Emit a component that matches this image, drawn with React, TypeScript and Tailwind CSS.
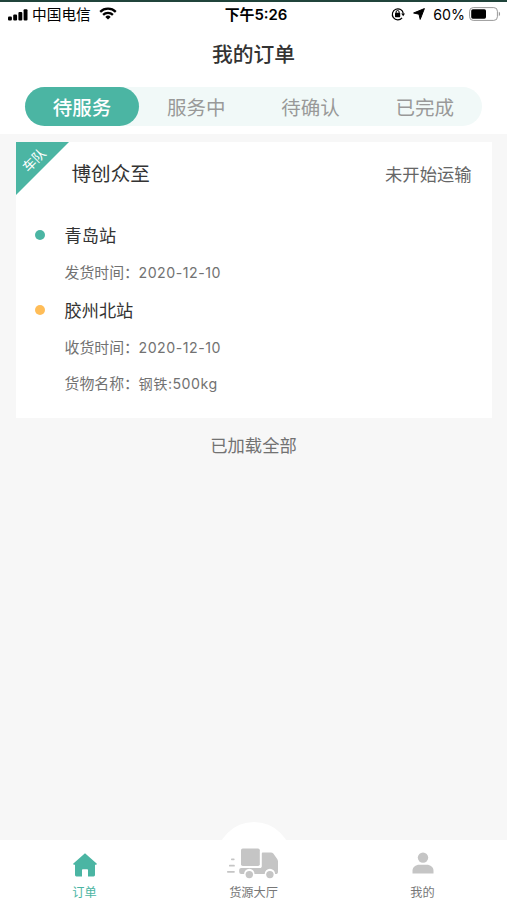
import * as React from 'react';

const tabs = ['待服务', '服务中', '待确认', '已完成'];

const orders = [
  {
    id: 1,
    tag: '车队',
    company: '博创众至',
    status: '未开始运输',
    from: '青岛站',
    sendDate: '2020-12-10',
    to: '胶州北站',
    receiveDate: '2020-12-10',
    goods: '钢铁:500kg',
  },
];

function StatusBar() {
  return (
    <div className="grid h-[26px] grid-cols-3 items-center text-[14.7px] leading-none text-black">
      <div className="flex items-center pl-2">
        <svg width="20" height="12" viewBox="0 0 20 12" fill="currentColor">
          <rect x="0" y="7.6" width="3.9" height="4" rx="1.1" />
          <rect x="5.2" y="5.6" width="3.9" height="6" rx="1.1" />
          <rect x="10.4" y="3" width="3.9" height="8.6" rx="1.1" />
          <rect x="15.6" y="0.2" width="3.9" height="11.4" rx="1.1" />
        </svg>
        <span className="mt-px ml-1 whitespace-nowrap">中国电信</span>
        <svg
          className="-mt-0.5 ml-2"
          width="18"
          height="13"
          viewBox="0 0 18 13"
          fill="none"
          stroke="currentColor"
          strokeWidth="2.3"
        >
          <path d="M1.2 4.8a11.2 11.2 0 0 1 15.6 0" />
          <path d="M4.1 7.9a7 7 0 0 1 9.8 0" />
          <path
            d="M9 12.6 6.3 9.9a3.9 3.9 0 0 1 5.4 0z"
            fill="currentColor"
            stroke="none"
          />
        </svg>
      </div>
      <div className="mt-px pl-[5px] text-center text-[14.9px] font-semibold">
        下午5:26
      </div>
      <div className="-mt-0.5 flex items-center justify-end pr-[6px]">
        <svg width="14" height="14" viewBox="0 0 14 14" fill="none">
          <path
            d="M11.1 10.8A5.5 5.5 0 1 1 12.3 6.6"
            stroke="currentColor"
            strokeWidth="1.2"
          />
          <path d="M10.2 6.5h3.8l-1.8 2.8z" fill="currentColor" />
          <rect x="4" y="5.8" width="5.2" height="4.4" rx="0.6" fill="currentColor" />
          <path d="M5.1 6.4V5a1.5 1.5 0 0 1 3 0v1.4" stroke="currentColor" />
        </svg>
        <svg
          className="ml-2"
          width="12"
          height="12"
          viewBox="0 0 12 12"
          fill="currentColor"
          stroke="currentColor"
          strokeLinejoin="round"
        >
          <path d="M11.4 0.6 7.2 11.4 6 6.2 0.6 5z" />
        </svg>
        <span className="mt-0.5 ml-2 text-[14.2px]">60%</span>
        <svg className="ml-1" width="32" height="14" viewBox="0 0 32 14">
          <rect
            x="0.6"
            y="0.6"
            width="27.8"
            height="12.8"
            rx="3.6"
            fill="none"
            stroke="#999"
          />
          <rect x="2.2" y="2.3" width="14.8" height="9.4" rx="1.6" fill="#000" />
          <path d="M29.8 4.8c1.7.4 1.7 4 0 4.4z" fill="#999" />
        </svg>
      </div>
    </div>
  );
}

function InfoRow({ label, value }: { label: string; value: string }) {
  return (
    <div className="flex h-5 items-center pl-[49px] text-[14.2px] leading-5 text-[#727272]">
      <span className="w-[74px] text-[14.9px] whitespace-nowrap">{label}：</span>
      <span className="tracking-[0.5px]">{value}</span>
    </div>
  );
}

function StationRow({ name, dot }: { name: string; dot: string }) {
  return (
    <div className="flex h-6 items-center pl-[19px] text-[17.2px] leading-6 text-[#333]">
      <span className={`mr-5 h-2.5 w-2.5 rounded-full ${dot}`} />
      <span className="pt-px">{name}</span>
    </div>
  );
}

function OrderCard({ order }: { order: (typeof orders)[number] }) {
  return (
    <div className="relative mx-auto h-[276px] w-[476px] bg-white pt-[18px]">
      <svg
        className="absolute top-0 left-0"
        width="53"
        height="53"
        viewBox="0 0 53 53"
      >
        <path d="M0 0h53L0 53z" fill="#4bb5a3" />
      </svg>
      <span className="absolute top-[8px] left-[2px] w-8 -rotate-45 text-center text-[13.2px] leading-5 text-white">
        {order.tag}
      </span>
      <div className="flex h-[30px] items-center justify-between pr-5 pl-14 text-[#333]">
        <span className="text-[19.6px]">{order.company}</span>
        <span className="text-[17.3px] text-[#666]">{order.status}</span>
      </div>
      <div className="mt-[33px]">
        <StationRow name={order.from} dot="bg-[#4bb5a3]" />
        <div className="mt-4">
          <InfoRow label="发货时间" value={order.sendDate} />
        </div>
        <div className="mt-[15px]">
          <StationRow name={order.to} dot="bg-[#ffbd58]" />
        </div>
        <div className="mt-4 space-y-4">
          <InfoRow label="收货时间" value={order.receiveDate} />
          <InfoRow label="货物名称" value={order.goods} />
        </div>
      </div>
    </div>
  );
}

function TabBar() {
  return (
    <nav className="relative grid h-[60px] shrink-0 grid-cols-3 bg-white text-[12.2px] text-[#777]">
      <div className="absolute -top-[18px] left-1/2 h-[75px] w-[75px] -translate-x-1/2 rounded-full bg-white" />
      <button className="flex flex-col items-center pt-[13px] text-[#4bb5a3]">
        <svg width="24" height="24" viewBox="0 0 24 24" fill="currentColor">
          <path d="M12 0.2 23.6 10.6a.7.7 0 0 1-.5 1.2H22V22a1.4 1.4 0 0 1-1.4 1.4H15V17a.8.8 0 0 0-.8-.8H9.8A.8.8 0 0 0 9 17v6.4H3.4A1.4 1.4 0 0 1 2 22V11.8H.9a.7.7 0 0 1-.5-1.2z" />
        </svg>
        <span className="mt-2 leading-4">订单</span>
      </button>
      <button className="relative flex flex-col items-center pt-2">
        <svg
          className="mr-[2px]"
          width="52"
          height="31"
          viewBox="0 0 52 31"
          fill="#c5c5c5"
        >
          <rect x="14" y="0.4" width="18.8" height="17.6" rx="1.8" />
          <path d="M36 4.4h7.9c1 0 1.8.4 2.4 1.1l3.9 5.6c.5.7.8 1.5.8 2.4v10.4c0 1.2-.8 2.1-2 2.1h-.9a5.2 5.2 0 0 0-10.4 0H27.5a5.2 5.2 0 0 0-10.4 0h-2.9a2 2 0 0 1-2-2v-2c0-1.1.9-2 2-2h18.8c1 0 1.8-.8 1.8-1.8V5.6c0-.7.5-1.2 1.2-1.2z" />
          <circle cx="22.3" cy="26.6" r="3.7" />
          <circle cx="42.9" cy="26.6" r="3.7" />
          <rect x="4" y="10.5" width="3.6" height="1.8" rx=".7" />
          <rect x="2" y="16.8" width="5.8" height="1.8" rx=".7" />
          <rect x="0" y="23" width="7.8" height="1.8" rx=".7" />
        </svg>
        <span className="mt-1.5 leading-4">货源大厅</span>
      </button>
      <button className="flex flex-col items-center pt-3">
        <svg width="22" height="22" viewBox="0 0 22 22" fill="#c5c5c5">
          <circle cx="11" cy="5.6" r="5.2" />
          <path d="M.5 21.4v-2.6c0-3.6 3-6 7-6h7c4 0 7 2.4 7 6v2.6z" />
        </svg>
        <span className="mt-[11px] leading-4">我的</span>
      </button>
    </nav>
  );
}

export default function App() {
  const [active, setActive] = React.useState(0);

  return (
    <div
      lang="zh-CN"
      className="flex h-[900px] w-[507px] flex-col overflow-hidden bg-[#f7f7f7] font-['Inter','Noto_Sans_CJK_SC',sans-serif]"
    >
      <header className="h-[134px] shrink-0 border-t-2 border-[#20443b] bg-white">
        <StatusBar />
        <h1 className="mt-3 text-center text-[20.8px] leading-[30px] font-medium text-[#333]">
          我的订单
        </h1>
        <div className="mx-auto mt-[17px] grid h-[39px] w-[457px] grid-cols-4 rounded-full bg-[#f1f9f8] text-[19.5px] text-[#999]">
          {tabs.map((tab, index) => (
            <button
              key={tab}
              type="button"
              onClick={() => setActive(index)}
              className={
                index === active
                  ? 'rounded-full bg-[#4bb5a3] pt-1 font-medium text-white'
                  : 'rounded-full pt-1'
              }
            >
              {tab}
            </button>
          ))}
        </div>
      </header>

      <main className="flex-1 pt-2">
        {orders.map((order) => (
          <OrderCard key={order.id} order={order} />
        ))}
        <p className="mt-4 text-center text-[17.3px] leading-6 text-[#727272]">
          已加载全部
        </p>
      </main>

      <TabBar />
    </div>
  );
}
